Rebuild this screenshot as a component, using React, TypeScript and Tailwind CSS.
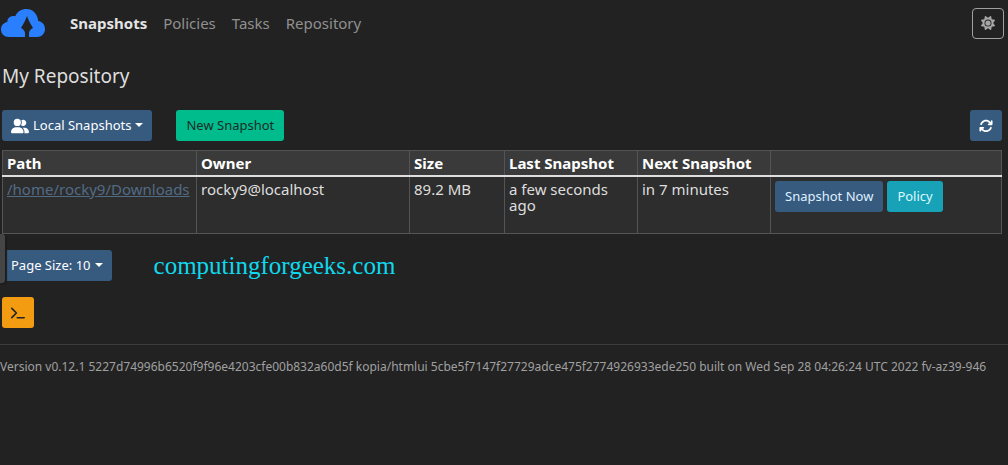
import { FaArrowsRotate, FaSun, FaTerminal, FaUserGroup } from "react-icons/fa6";

const navItems = ["Snapshots", "Policies", "Tasks", "Repository"];

const columns = [
  { label: "Path", width: "w-[194px]" },
  { label: "Owner", width: "w-[213px]" },
  { label: "Size", width: "w-[95px]" },
  { label: "Last Snapshot", width: "w-[133px]" },
  { label: "Next Snapshot", width: "w-[133px]" },
  { label: "", width: "" },
];

const snapshots = [
  {
    path: "/home/rocky9/Downloads",
    owner: "rocky9@localhost",
    size: "89.2 MB",
    last: "a few seconds ago",
    next: "in 7 minutes",
  },
];

const btn = "inline-flex h-[31px] items-center justify-center rounded-[3px] text-[13px]";
const cell = "border-x border-[#545454] px-1 py-1";

function Logo() {
  return (
    <svg viewBox="0 0 46 30" className="h-[30px] w-[46px]" aria-label="Kopia">
      <path
        fill="#2a7fff"
        d="M9 29C4 29 1 25.500 1 21.500C1 17.500 3.500 14.700 7.300 14C7.500 9.500 11 7.500 15.200 8.200C17.500 3.500 21.500 1 26.500 1C32.500 1 37.500 5.500 38.200 13C42.500 13.500 45 17 45 21C45 25.500 41.500 29 37 29H29V25C29.300 22.500 31 21 33 20C31 16.500 28.500 12.500 27 8C25.500 12.500 23 16.500 21 20C23 21 24.700 22.500 25 25V29Z"
      />
    </svg>
  );
}

function Caret() {
  return (
    <span className="mb-0.5 ml-1 border-x-4 border-t-4 border-x-transparent border-t-current" />
  );
}

export default function App() {
  return (
    <div className="relative min-h-screen overflow-hidden bg-[#222] font-['Noto_Sans',sans-serif] text-[15px] text-[#dedede]">
      <header className="flex h-[46px] items-center pr-1">
        <a href="#home">
          <Logo />
        </a>
        <nav className="ml-6 flex flex-1 gap-4">
          {navItems.map((item, i) => (
            <a
              key={item}
              href={`#${item.toLowerCase()}`}
              className={i === 0 ? "font-bold text-[#e4e4e4]" : "text-[#909090]"}
            >
              {item}
            </a>
          ))}
        </nav>
        <button
          type="button"
          aria-label="Toggle theme"
          className="flex h-[31px] w-8 items-center justify-center rounded-[4px] border border-[#a0a0a0] text-[#a6a6a6]"
        >
          <FaSun size={14} />
        </button>
      </header>

      <main className="px-0.5">
        <h1 className="mt-4 text-[19px] leading-7 text-[#dedede]">My Repository</h1>

        <div className="mt-5 flex pr-1">
          <button type="button" className={`${btn} bg-[#375a7f] px-[9px] text-white`}>
            <FaUserGroup size={18} className="mr-1" />
            Local Snapshots
            <Caret />
          </button>
          <button type="button" className={`${btn} ml-6 bg-[#00bc8c] px-[10px] text-[#1c2b27]`}>
            New Snapshot
          </button>
          <button
            type="button"
            aria-label="Refresh"
            className={`${btn} ml-auto w-8 bg-[#375a7f] text-white`}
          >
            <FaArrowsRotate size={14} />
          </button>
        </div>

        <div className="mt-[9px] pr-1">
          <table className="w-full table-fixed border-collapse border border-[#545454]">
            <thead className="bg-[#3a3a3a] text-left text-white">
              <tr className="h-[25px] border-b-2 border-[#dedede]">
                {columns.map((col) => (
                  <th
                    key={col.label}
                    className={`${col.width} border-x border-[#545454] px-1 leading-4`}
                  >
                    {col.label}
                  </th>
                ))}
              </tr>
            </thead>
            <tbody className="bg-[#2d2d2d]">
              {snapshots.map((s) => (
                <tr key={s.path} className="h-[58px] align-top leading-4">
                  <td className={cell}>
                    <a href="#snapshot" className="text-[#526b85] underline">
                      {s.path}
                    </a>
                  </td>
                  <td className={cell}>{s.owner}</td>
                  <td className={cell}>{s.size}</td>
                  <td className={cell}>{s.last}</td>
                  <td className={cell}>{s.next}</td>
                  <td className={cell}>
                    <div className="flex gap-1">
                      <button type="button" className={`${btn} bg-[#375a7f] px-[10px] text-[#dff1ff]`}>
                        Snapshot Now
                      </button>
                      <button type="button" className={`${btn} bg-[#17a2b8] px-[10px] text-[#dff9ff]`}>
                        Policy
                      </button>
                    </div>
                  </td>
                </tr>
              ))}
            </tbody>
          </table>
        </div>

        <div className="mt-4 flex items-center">
          <button type="button" className={`${btn} bg-[#375a7f] px-[9px] text-white`}>
            Page Size: 10
            <Caret />
          </button>
          <a
            href="#site"
            className="ml-[42px] font-['Liberation_Serif',serif] text-[25px] leading-7 text-[#10d8ee]"
          >
            computingforgeeks.com
          </a>
        </div>

        <button
          type="button"
          aria-label="Show CLI command"
          className={`${btn} mt-4 w-8 bg-[#f39c12] text-[#222]`}
        >
          <FaTerminal size={14} />
        </button>
      </main>

      <footer className="mt-4 border-t border-[#3d3d3d] pt-3">
        <p className="text-xs leading-5 whitespace-nowrap text-[#a0a0a0]">
          Version v0.12.1 5227d74996b6520f9f96e4203cfe00b832a60d5f kopia/htmlui
          5cbe5f7147f27729adce475f2774926933ede250 built on Wed Sep 28 04:26:24 UTC 2022
          fv-az39-946
        </p>
      </footer>

      {/* edge handle, sits over the page content */}
      <div className="absolute top-[234px] left-0 h-[49px] w-[5px] rounded-r-[3px] bg-[#454545] shadow-[2px_1px_1px_#1c1c1c]" />
    </div>
  );
}
